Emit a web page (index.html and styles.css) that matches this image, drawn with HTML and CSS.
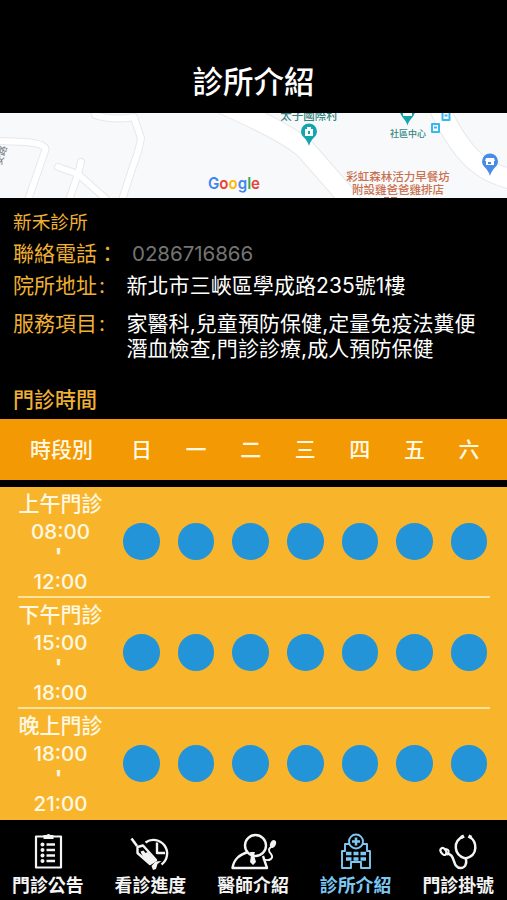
FILE: index.html
```html
<!DOCTYPE html>
<html lang="zh-Hant">
<head>
<meta charset="utf-8">
<title>診所介紹</title>
<link rel="stylesheet" href="styles.css">
</head>
<body>
<header class="header"><h1>診所介紹</h1></header>

<svg class="map" viewBox="0 113 507 85" width="507" height="85">
  <rect y="113" width="507" height="85" fill="#f8f9fb"/>
  <g class="road-edge">
    <path d="M0 141 L25 142 Q48 144 45 151 L28 200"/>
    <path d="M58 167 L78 174 L106 199 M81 162 L78 174 L69 200"/>
    <path d="M95 115 Q113 121 134 117 Q138 130 141 138 Q139 151 133 166 L122 200"/>
    <path class="wide" d="M225 105 Q290 134 306 150 L354 205"/>
    <path class="wide" d="M439 108 Q458 147 476 162 Q491 175 515 180"/>
  </g>
  <g class="road">
    <path d="M0 141 L25 142 Q48 144 45 151 L28 200"/>
    <path d="M58 167 L78 174 L106 199 M81 162 L78 174 L69 200"/>
    <path d="M95 115 Q113 121 134 117 Q138 130 141 138 Q139 151 133 166 L122 200"/>
    <path class="wide" d="M225 105 Q290 134 306 150 L354 205"/>
    <path class="wide" d="M439 108 Q458 147 476 162 Q491 175 515 180"/>
  </g>
  <text class="street" transform="translate(1 166) rotate(-72)">安路</text>
  <text class="place" x="309" y="120" font-size="11.5">太子國際村</text>
  <text class="place" x="408" y="136.500" font-size="9">社區中心</text>
  <text class="shop" x="398" y="180.500" font-size="11.500">彩虹森林活力早餐坊</text>
  <text class="shop" x="398" y="194" font-size="11.500">附設雞爸爸雞排店</text>
  <path d="M384 197.500h5m2 0h6" stroke="#c9714f"/>
  <g fill="#12a5ae">
    <path d="M309 146 C307 138 301 137 301 131.500 A8 8 0 0 1 317 131.500 C317 137 311 138 309 146Z"/>
    <path d="M407.500 125.500 C406 119 400 117 400 111 H415 C415 117 409 119 407.500 125.500Z"/>
  </g>
  <path d="M305 129h8v7h-8zM307 129v-2h4v2M403 112h9v4h-9z" fill="#fff"/>
  <path d="M308 131h2v3h-2z" fill="#12a5ae"/>
  <path d="M490 176 C488 168 482 167 482 161.500 A8 8 0 0 1 498 161.500 C498 167 492 168 490 176Z" fill="#4a8be9"/>
  <path d="M486 158h8l1 3h-1v4h-8v-4h-1z" fill="#fff"/>
  <path d="M488 162h3v2h-3z" fill="#4a8be9"/>
  <g fill="#35b9f0">
    <rect x="431" y="123" width="9" height="10" rx="1"/>
    <rect x="441.500" y="111" width="9" height="10" rx="1"/>
  </g>
  <path d="M433 125h5v6h-5zM443.500 113h5v6h-5z" fill="#fff"/>
  <path d="M434 126.500h3v2h-3zM444.500 114.500h3v2h-3z" fill="#35b9f0"/>
  <text class="google" x="208" y="189" textLength="52" lengthAdjust="spacingAndGlyphs"><tspan fill="#4285f4">G</tspan><tspan fill="#ea4335">o</tspan><tspan fill="#fbbc05">o</tspan><tspan fill="#4285f4">g</tspan><tspan fill="#34a853">l</tspan><tspan fill="#ea4335">e</tspan></text>
</svg>

<section class="info">
  <div class="clinic">新禾診所</div>
  <div class="row phone"><span class="label">聯絡電話<i>：</i></span><a class="number">0286716866</a></div>
  <div class="row address"><span class="label">院所地址<i>:</i></span><span class="value">新北市三峽區學成路235號1樓</span></div>
  <div class="row services"><span class="label">服務項目<i>:</i></span><span class="value">家醫科,兒童預防保健,定量免疫法糞便<br>潛血檢查,門診診療,成人預防保健</span></div>
  <h2>門診時間</h2>
</section>

<section class="schedule">
  <div class="days"><span>時段別</span><span>日</span><span>一</span><span>二</span><span>三</span><span>四</span><span>五</span><span>六</span></div>
  <div class="sessions">
    <div class="session"><div class="time"><b>上午門診</b><span>08:00</span><em>'</em><span>12:00</span></div><i></i><i></i><i></i><i></i><i></i><i></i><i></i></div>
    <div class="session"><div class="time"><b>下午門診</b><span>15:00</span><em>'</em><span>18:00</span></div><i></i><i></i><i></i><i></i><i></i><i></i><i></i></div>
    <div class="session"><div class="time"><b>晚上門診</b><span>18:00</span><em>'</em><span>21:00</span></div><i></i><i></i><i></i><i></i><i></i><i></i><i></i></div>
  </div>
</section>

<nav class="tabs">
  <a class="tab">
    <svg viewBox="0 0 50 40"><rect x="13" y="3.500" width="25" height="31" stroke-width="2.200"/><path d="M20.500 2h3q2-2 4 0h3v4h-10z" class="solid"/><path d="M23.500 11.500h8.500M23.500 17h8.500M23.500 22.500h8.500M23.500 28h8.500" stroke-width="2.400"/><g class="solid"><circle cx="19.500" cy="11.500" r="2"/><circle cx="19.500" cy="17" r="2"/><circle cx="19.500" cy="22.500" r="2"/><circle cx="19.500" cy="28" r="2"/></g></svg>
    <span>門診公告</span>
  </a>
  <a class="tab">
    <svg viewBox="0 0 50 40"><path d="M20.500 9.500A13.600 13.600 0 1 1 36.500 31.500M32 9.500v10.500h8" stroke-width="2.400"/><path d="M6.500 5.500l5.500 7.500" stroke-width="2.600"/><path d="M12.500 20v-6l5.500-1.500L31 27l-6 4z" stroke-width="2.400"/><path d="M15.500 18.500l3-1 2 2.500 2-1 8 8-4 4-3-1-6-7zM26.500 33l4-4.500 6-.5-4 3-1.500 5-3 1z" class="solid"/></svg>
    <span>看診進度</span>
  </a>
  <a class="tab">
    <svg viewBox="0 0 50 40"><circle cx="27.500" cy="12.500" r="10.500" stroke-width="2.400"/><path d="M20 19C11 22 6 26 4.500 35H39l-4-12" stroke-width="2.400"/><path d="M35 26c7 3 11-1 8-5-3-3-3-6 2-8"/><ellipse cx="45" cy="11" rx="2.800" ry="4" transform="rotate(25 45 11)" class="solid"/><path d="M22 19h5l-1 3 2 7-3 3-3-3 1-7z" class="solid"/></svg>
    <span>醫師介紹</span>
  </a>
  <a class="tab active">
    <svg viewBox="0 0 50 40"><circle cx="25" cy="8.500" r="7"/><path d="M25 4.500v8M21 8.500h8" stroke-width="2.600"/><path d="M18 11h-4v7h-3v17h9v-6h10v6h9V18h-3v-7h-4"/><path d="M15 20.500h5.500m2 0h5m2 0h5.500M15 26h5.500m2 0h5m2 0h5.500" stroke-width="3.600"/></svg>
    <span>診所介紹</span>
  </a>
  <a class="tab">
    <svg viewBox="0 0 50 40"><path d="M30 3.500C20 8 20 22 32.500 25.500c13-3 12-17 3.500-22M33 25.500c1 6-1 9.500-5.500 9.500-9 0-4-15.500-15-14.500" stroke-width="2.500"/><path d="M28 4.500l3-1.500M38.500 4.500l-3-1.500" stroke-width="3.400"/><ellipse cx="10.500" cy="18.500" rx="2.500" ry="3.800" transform="rotate(-35 10.500 18.500)" stroke-width="2.200"/><path d="M12 16c4 0 5 3 2 6"/></svg>
    <span>門診掛號</span>
  </a>
</nav>
</body>
</html>
```

FILE: styles.css
```css
* { box-sizing: border-box; }
body {
  margin: 0;
  width: 507px;
  height: 900px;
  overflow: hidden;
  display: flex;
  flex-direction: column;
  background: #000;
  color: #fff;
  font-family: Inter, "Noto Sans CJK TC", sans-serif;
}
h1, h2 { margin: 0; }
i, em { font-style: normal; }
.header { height: 113px; padding-top: 58px; text-align: center; }
.header h1 { font-size: 30.5px; line-height: 48px; font-weight: 500; }

.map { display: block; flex: none; }
.map text { font-family: "Noto Sans CJK TC", sans-serif; }
.road-edge path { fill: none; stroke: #e6e8eb; stroke-width: 8; stroke-linecap: round; stroke-linejoin: round; }
.road path { fill: none; stroke: #fff; stroke-width: 6; stroke-linecap: round; stroke-linejoin: round; }
.road-edge .wide { stroke-width: 21; }
.road .wide { stroke-width: 19; }
.map .place { fill: #33857f; text-anchor: middle; font-weight: 500; }
.map .shop { fill: #c9714f; text-anchor: middle; font-weight: 500; }
.map .street { fill: #777; font-size: 10px; }
.map .google { font-family: Inter, sans-serif; font-size: 16px; font-weight: 600; }

.info { height: 221px; padding: 11px 0 0 13px; font-size: 21px; flex: none; }
.clinic { color: #efb034; font-size: 18.7px; line-height: 28px; }
.row { display: flex; line-height: 32px; white-space: nowrap; }
.label { width: 113.5px; color: #efb034; }
.label i { display: inline-block; margin-left: 2px; }
.phone { margin-top: 1px; }
.phone .label { width: 119px; }
.phone .label i { margin-left: 0; }
.number { color: #747474; font-size: 20.5px; letter-spacing: -0.05px; }
.value { letter-spacing: 0.06px; }
.services { margin-top: 9px; }
.services, .services .label { line-height: 25px; }
.info h2 { margin-top: 24px; font-size: 21px; line-height: 30px; font-weight: 500; color: #efb034; }

.schedule { flex: none; }
.days, .session { display: grid; grid-template-columns: 96.2px repeat(7, 54.6px); align-items: center; color: #fff8e2; }
.days { height: 61px; margin-bottom: 7px; padding: 0 0 3px 18px; background: #f39903; text-align: center; font-size: 21px; font-weight: 500; }
.days > :first-child { padding-right: 9px; }
.sessions { background: #f8b52c; height: 333px; }
.session { height: 111px; margin: 0 17px 0 18px; border-bottom: 2px solid #fde39a; justify-items: center; }
.session:last-child { border-color: transparent; }
.session i { width: 36.5px; height: 36.5px; border-radius: 50%; background: #2394d7; }
.time { width: 85px; justify-self: start; align-self: start; display: flex; flex-direction: column; align-items: center; padding-top: 3px; font-size: 21px; font-weight: 500; white-space: nowrap; }
.time b { line-height: 28px; font-weight: 500; }
.time span { line-height: 27px; font-size: 20.5px; font-weight: 550; }
.time em { line-height: 23px; height: 23px; font-size: 20px; font-weight: 800; transform: translateX(-2px); }

.tabs { height: 80px; display: flex; justify-content: center; margin-left: -1px; }
.tab { width: 102.6px; flex: none; padding-top: 13px; display: flex; flex-direction: column; align-items: center; font-size: 17.9px; font-weight: 700; color: #f4f4f4; }
.tab svg { width: 50px; height: 40px; fill: none; stroke: currentColor; stroke-width: 1.9; stroke-linejoin: round; overflow: visible; }
.tab span { line-height: 26px; white-space: nowrap; }
.tab .solid { fill: currentColor; stroke: none; }
.tab.active { color: #7dc8f3; }
```
